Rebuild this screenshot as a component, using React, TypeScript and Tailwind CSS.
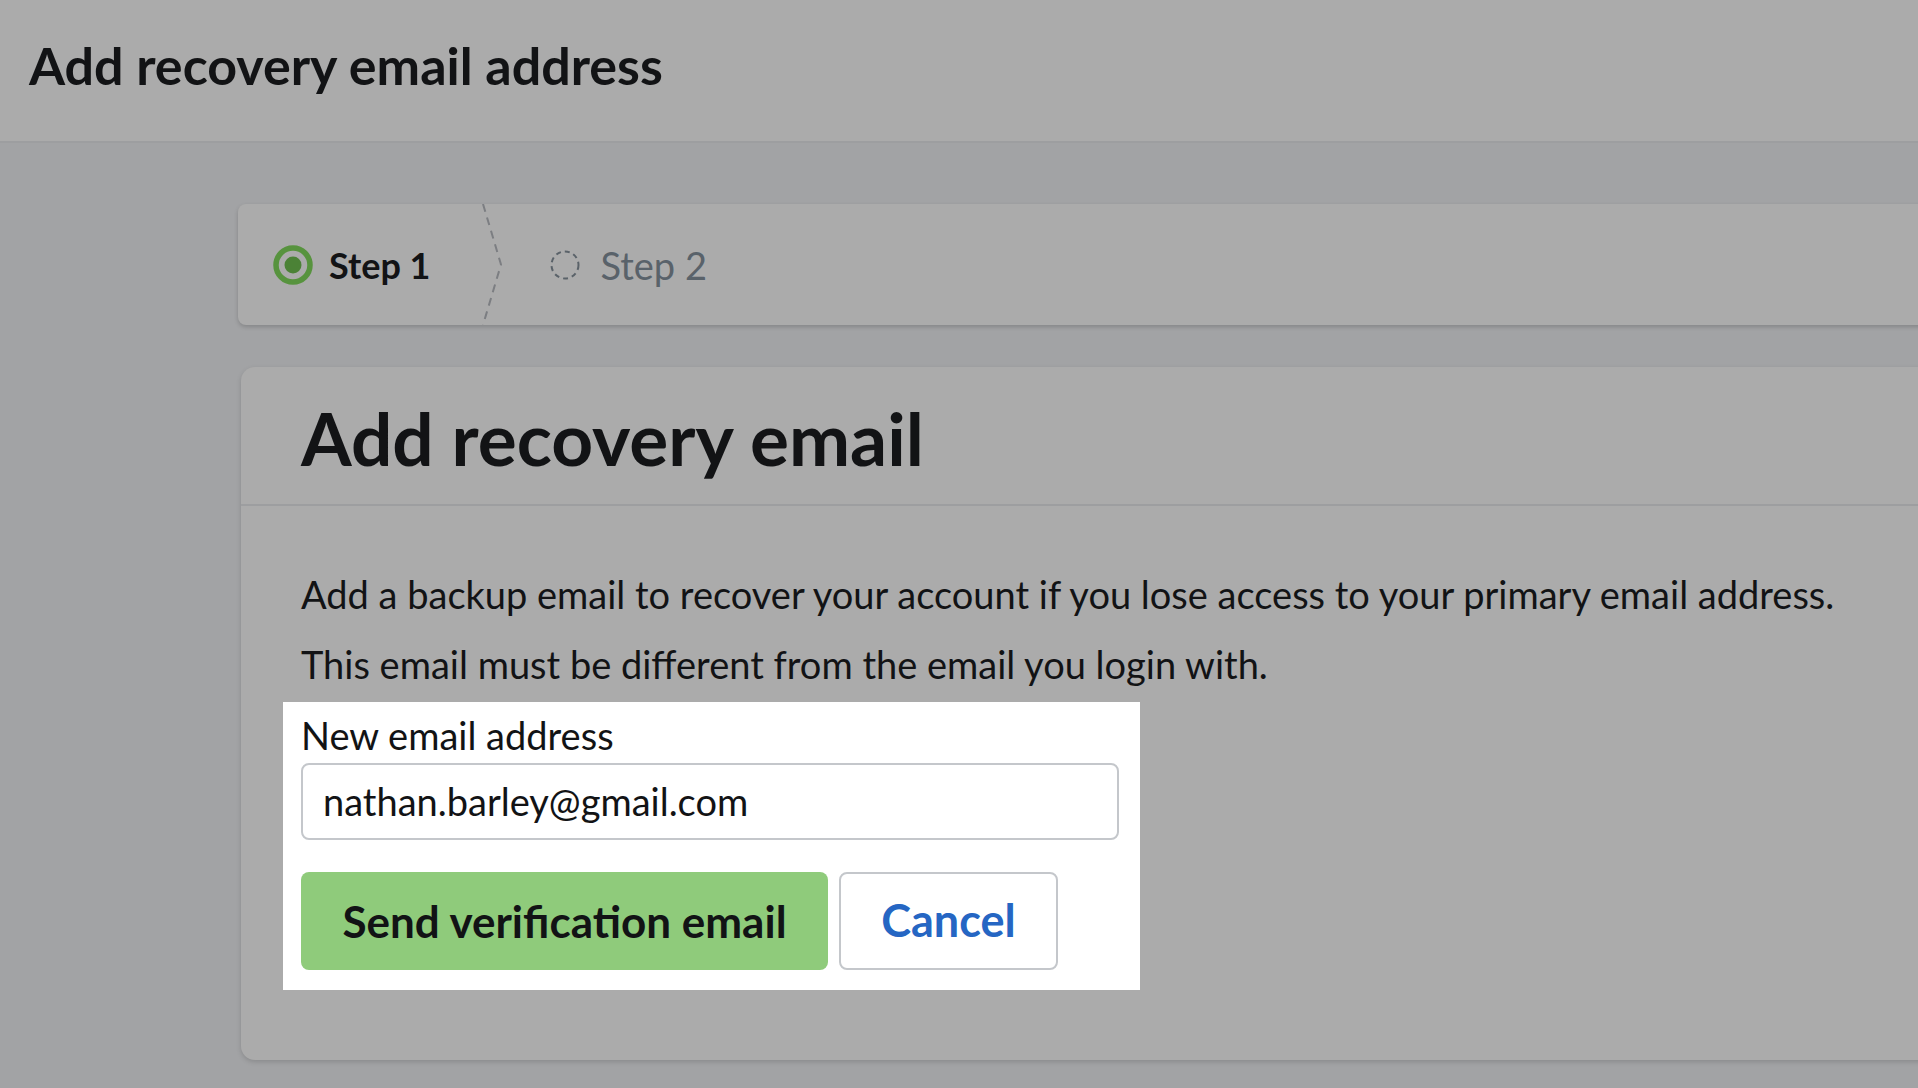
import React from "react";

function Step1Icon() {
  return (
    <svg width="40" height="40" viewBox="0 0 40 40" className="shrink-0">
      <circle cx="20" cy="20" r="17" fill="none" stroke="#57933e" strokeWidth="5.5" />
      <circle cx="20" cy="20" r="8.5" fill="#4b8236" />
    </svg>
  );
}

function Step2Icon() {
  return (
    <svg width="30" height="30" viewBox="0 0 30 30" className="shrink-0">
      <circle cx="15" cy="15" r="13.5" fill="none" stroke="#5a6269" strokeWidth="2" strokeDasharray="5 4" />
    </svg>
  );
}

function Chevron() {
  return (
    <svg width="24" height="121" viewBox="0 0 24 121" className="shrink-0">
      <polyline points="2,0 20,60.5 2,121" fill="none" stroke="#7c7e82" strokeWidth="2" strokeDasharray="8 6" />
    </svg>
  );
}

export default function App() {
  return (
    <div
      className="w-full h-screen overflow-hidden bg-[#a2a3a5] text-[#121315]"
      style={{ fontFamily: "Lato, 'Noto Sans', sans-serif" }}
    >
      <header className="h-[143px] bg-[#ababab] border-b-2 border-[#9d9ea0] pl-[29px] pt-[35px]">
        <h1 className="text-[52px] leading-[60px] font-bold">Add recovery email address</h1>
      </header>

      <main className="pl-[238px] pt-[61px]">
        <div className="h-[121px] bg-[#ababab] rounded-lg -mr-8 flex items-center shadow-[0_2px_4px_rgba(0,0,0,0.18)]">
          <div className="pl-[35px] flex items-center gap-[16px]">
            <Step1Icon />
            <span className="text-[36px] leading-[44px] font-bold">Step 1</span>
          </div>
          <div className="ml-[50px]">
            <Chevron />
          </div>
          <div className="ml-[45px] flex items-center gap-[21px]">
            <Step2Icon />
            <span className="text-[38px] leading-[44px] text-[#59626a]">Step 2</span>
          </div>
        </div>

        <div className="mt-[42px] ml-[3px] h-[693px] bg-[#ababab] rounded-[14px] -mr-8 shadow-[0_2px_5px_rgba(0,0,0,0.15)]">
          <div className="border-b-2 border-[#9d9ea0] pl-[60px] pt-[31px] pb-[26px]">
            <h2 className="text-[73px] leading-[80px] font-bold">Add recovery email</h2>
          </div>
          <div className="pl-[60px] pt-[66px]">
            <p className="text-[38px] leading-[44px]">
              Add a backup email to recover your account if you lose access to your primary email address.
            </p>
            <p className="text-[38px] leading-[44px] mt-[26px]">
              This email must be different from the email you login with.
            </p>
            <div className="mt-[16px] -ml-[18px] w-[857px] bg-white pl-[18px] pt-[11px] pb-[20px]">
              <label className="block text-[38px] leading-[44px]">New email address</label>
              <div className="mt-[6px] w-[818px] h-[77px] border-2 border-[#c4c7cb] rounded-lg flex items-center pl-[20px] text-[38px]">
                nathan.barley@gmail.com
              </div>
              <div className="mt-[32px] flex gap-[11px]">
                <button className="w-[527px] h-[98px] bg-[#8fcb7b] rounded-lg text-[44px] font-bold text-[#121315] flex items-center justify-center">
                  Send verification email
                </button>
                <button className="w-[219px] h-[98px] bg-white border-2 border-[#c4c7cb] rounded-lg text-[45px] font-bold text-[#2566c3] flex items-center justify-center">
                  Cancel
                </button>
              </div>
            </div>
          </div>
        </div>
      </main>
    </div>
  );
}
